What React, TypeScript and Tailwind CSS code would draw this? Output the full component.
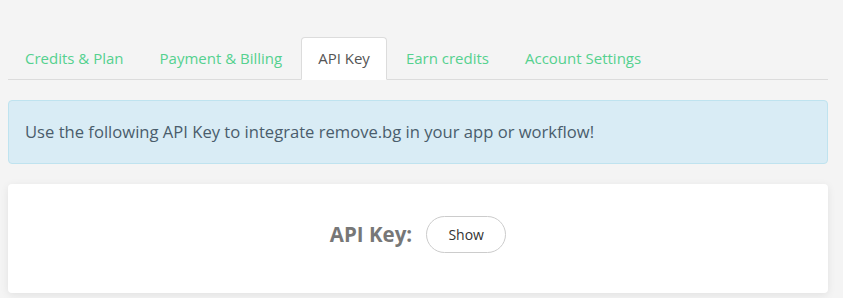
const tabs = ["Credits & Plan", "Payment & Billing", "API Key", "Earn credits", "Account Settings"];

export default function App() {
  return (
    <div className="min-h-[298px] bg-[#f4f4f4] px-2 pt-[37px] font-['Open_Sans',sans-serif]">
      <div className="mr-[7px] flex border-b border-[#dcdcdc]">
        {tabs.map((t) => {
          const active = t === "API Key";
          return (
            <div
              key={t}
              className={
                active
                  ? "-mb-px mr-[2px] rounded-t border border-[#dcdcdc] border-b-white bg-white px-4 pb-[10px] pt-[9px] text-[15px] leading-[22px] text-[#555]"
                  : "-mb-px mr-[2px] border border-transparent px-4 pb-[10px] pt-[9px] text-[15px] leading-[22px] text-[#55d18f]"
              }
            >
              {t}
            </div>
          );
        })}
      </div>
      <div className="mr-[7px] mt-[20px] flex h-[64px] items-center rounded border border-[#bfe3ef] bg-[#d9ecf5] px-4 text-[16.6px] text-[#4a5d6c]">
        Use the following API Key to integrate remove.bg in your app or workflow!
      </div>
      <div className="mr-[7px] mt-[20px] flex h-[109px] items-center justify-center gap-[14px] rounded bg-white pb-2 shadow-[0_2px_8px_rgba(0,0,0,0.08)]">
        <span className="text-[20.5px] font-bold text-[#777]">API Key:</span>
        <button className="h-[37px] w-[80px] rounded-full border border-[#ccc] bg-white text-[14px] text-[#333]">
          Show
        </button>
      </div>
    </div>
  );
}
